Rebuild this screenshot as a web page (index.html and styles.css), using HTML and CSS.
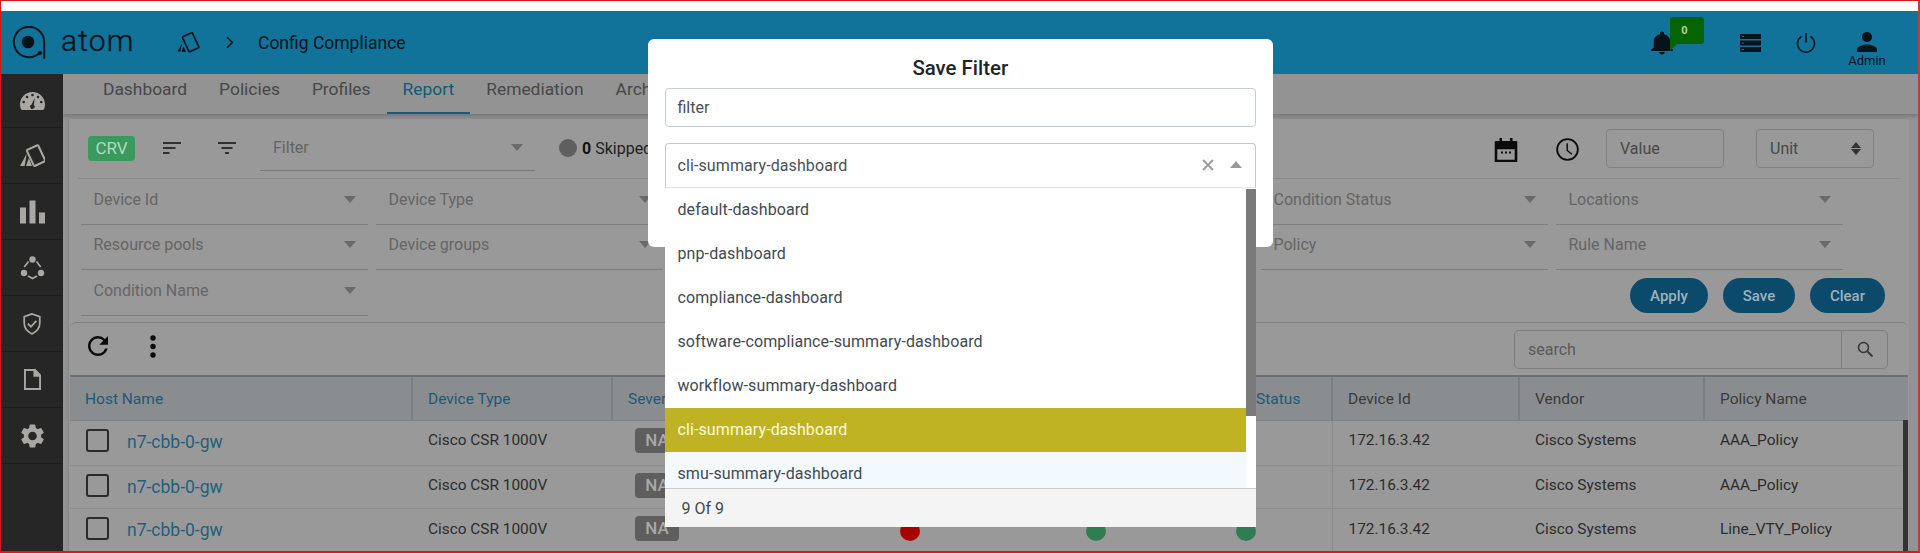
FILE: index.html
```html
<!DOCTYPE html>
<html lang="en">
<head>
<meta charset="utf-8">
<title>Config Compliance</title>
<link rel="stylesheet" href="styles.css">
</head>
<body>
<div class="page">
  <div class="topgap"></div>
  <header class="header">
    <svg class="logo" viewBox="0 0 34 34"><path d="M27.5 27a15.2 15.2 0 1 1 4.7-10.5V32" fill="none" stroke="#07131c" stroke-width="1.9" stroke-linecap="round"/><circle cx="16" cy="16" r="6.3" fill="#07131c"/><circle cx="28" cy="27" r="2" fill="#07131c"/></svg>
    <span class="brand">atom</span>
    <svg class="crumb-icon" viewBox="0 0 24 24"><rect x="8.200" y="3" width="11" height="16.500" rx="1.200" transform="rotate(-25 13.700 11.300)" fill="none" stroke="#07131c" stroke-width="1.700"/><path d="M5 12.500 .5 20.500h3zM6.300 15.500l-1.700 5.300h4.500z" fill="#07131c"/></svg>
    <svg class="chevron" viewBox="0 0 10 16"><path d="M1.5 1.5 8 8l-6.500 6.500" fill="none" stroke="#07131c" stroke-width="1.800"/></svg>
    <span class="crumb">Config Compliance</span>
    <div class="header-right">
      <div class="bell">
        <svg class="bell-icon" viewBox="4 2 16 20.5" preserveAspectRatio="none"><path d="M12 22c1.100 0 2-.9 2-2h-4c0 1.100.9 2 2 2zm6-6v-5c0-3.070-1.630-5.640-4.500-6.320V4c0-.83-.67-1.500-1.500-1.500s-1.500.67-1.500 1.500v.68C7.640 5.360 6 7.920 6 11v5l-2 2v1h16v-1l-2-2z" fill="#07131c"/></svg>
        <span class="notice">0</span>
      </div>
      <svg class="server" viewBox="0 0 21 18"><path d="M0 0h21v5H0zM0 6.500h21v5H0zM0 13h21v5H0z" fill="#07131c"/><path d="M2 2h2v1H2zM2 8.500h2v1H2zM2 15h2v1H2z" fill="#1a7ba3"/></svg>
      <svg class="power" viewBox="0 0 20 20"><path d="M5.500 3.500a8.500 8.500 0 1 0 9 0M10 0v9.500" fill="none" stroke="#07131c" stroke-width="1.600"/></svg>
      <div class="user">
        <svg class="user-icon" viewBox="4 4 16 16" preserveAspectRatio="none"><path d="M12 12c2.210 0 4-1.790 4-4s-1.790-4-4-4-4 1.790-4 4 1.790 4 4 4zm0 2c-2.670 0-8 1.340-8 4v2h16v-2c0-2.660-5.330-4-8-4z" fill="#07131c"/></svg>
        <span class="user-name">Admin</span>
      </div>
    </div>
  </header>

  <div class="body">
    <nav class="sidebar">
      <div class="side-item first">
        <svg class="side-icon" viewBox="0 0 25 18"><path d="M12.500 0C5.600 0 0 5.500 0 12.500c0 1.700.3 3.200.8 4.300.2.700.7 1.200 1.400 1.200h20.600c.7 0 1.200-.5 1.400-1.200.5-1.100.8-2.600.8-4.300C25 5.500 19.400 0 12.500 0z" fill="#a9a7a3"/><g fill="#262626"><circle cx="12.500" cy="3" r="1.300"/><circle cx="7" cy="5" r="1.300"/><circle cx="18" cy="5" r="1.300"/><circle cx="3.700" cy="10" r="1.300"/><circle cx="21.300" cy="10" r="1.300"/><path d="m14.800 5.800-1 7.200a2.200 2.200 0 1 1-2.300-.3z"/></g></svg>
      </div>
      <div class="side-item">
        <svg class="side-icon" viewBox="0 0 24 22"><rect x="9.400" y="2.100" width="12" height="17" rx="1.200" transform="rotate(-25 15.400 10.600)" fill="none" stroke="#a9a7a3" stroke-width="2"/><path d="M6.500 8.500 0 20.500h4.500zM8.500 13l-2.700 7.500h5.700z" fill="#a9a7a3"/></svg>
      </div>
      <div class="side-item">
        <svg class="side-icon" viewBox="0 0 25 23"><path d="M0 7h6v16H0zM9.500 0h6v23h-6zM19 12h6v11h-6z" fill="#a9a7a3"/></svg>
      </div>
      <div class="side-item">
        <svg class="side-icon" viewBox="0 0 24 24"><path d="M8 5.500 3.800 11M16 5.500l4.200 5.500M7.500 20l4.500 2.500 4.500-2.500" fill="none" stroke="#a9a7a3" stroke-width="1.800"/><circle cx="12" cy="3.500" r="3.200" fill="#a9a7a3"/><circle cx="3.500" cy="17" r="3.200" fill="#a9a7a3"/><circle cx="20.500" cy="17" r="3.200" fill="#a9a7a3"/></svg>
      </div>
      <div class="side-item">
        <svg class="side-icon icon-shield" viewBox="0 0 20 24"><path d="M10 1 1.500 4v7c0 5.500 3.500 9.500 8.500 12 5-2.500 8.500-6.500 8.500-12V4z" fill="none" stroke="#a9a7a3" stroke-width="1.900"/><path d="m5.500 11.500 3.300 3.500 6-6.500" fill="none" stroke="#a9a7a3" stroke-width="2"/></svg>
      </div>
      <div class="side-item">
        <svg class="side-icon icon-file" viewBox="0 0 18 22"><path d="M1 1h10l6 6v14H1z" fill="none" stroke="#a9a7a3" stroke-width="2"/><path d="M10 0h2l6 6v2h-8z" fill="#a9a7a3"/></svg>
      </div>
      <div class="side-item">
        <svg class="side-icon icon-gear" viewBox="2.500 2 19 20"><path d="M19.140 12.940c.04-.3.06-.61.06-.94 0-.32-.02-.64-.07-.94l2.030-1.580a.49.49 0 0 0 .12-.61l-1.920-3.320a.488.488 0 0 0-.59-.22l-2.390.96c-.5-.38-1.030-.7-1.620-.94l-.36-2.540a.484.484 0 0 0-.48-.41h-3.840c-.24 0-.43.17-.47.41l-.36 2.540c-.59.24-1.130.57-1.620.94l-2.390-.96c-.22-.08-.47 0-.59.22L2.740 8.870c-.12.21-.08.47.12.61l2.030 1.580c-.05.3-.09.63-.09.94s.02.64.07.94l-2.030 1.580a.49.49 0 0 0-.12.61l1.920 3.320c.12.22.37.29.59.22l2.390-.96c.5.38 1.030.7 1.620.94l.36 2.540c.05.24.24.41.48.41h3.840c.24 0 .44-.17.47-.41l.36-2.540c.59-.24 1.130-.56 1.620-.94l2.390.96c.22.08.47 0 .59-.22l1.920-3.320c.12-.22.07-.47-.12-.61l-2.010-1.580zM12 15.600c-1.980 0-3.600-1.620-3.600-3.600s1.620-3.600 3.600-3.600 3.600 1.620 3.600 3.600-1.620 3.600-3.600 3.600z" fill="#a9a7a3"/></svg>
      </div>
    </nav>

    <main class="main">
      <div class="tabs">
        <span class="tab">Dashboard</span>
        <span class="tab">Policies</span>
        <span class="tab">Profiles</span>
        <span class="tab active">Report</span>
        <span class="tab">Remediation</span>
        <span class="tab">Archive</span>
      </div>

      <section class="panel">
        <div class="topbar">
          <span class="crv">CRV</span>
          <svg class="sort-icon" viewBox="0 0 18 12"><path d="M0 1h18M0 6h12.500M0 11h6.500" stroke="#111" stroke-width="1.700"/></svg>
          <svg class="funnel-icon" viewBox="0 0 18 12"><path d="M0 1h18M3.500 6h11M7 11h4" stroke="#111" stroke-width="1.700"/></svg>
          <div class="filter-select"><span>Filter</span><i class="caret"></i></div>
          <span class="status-dot"></span>
          <span class="status-text"><b>0</b> Skipped</span>
          <div class="time-tools">
            <svg class="calendar" viewBox="0 0 24 24"><path d="M2 4.500h20V23H2zM2 10h20" fill="none" stroke="#0b0b0b" stroke-width="2.600"/><path d="M5.500 0h2.500v4H5.500zM16 0h2.500v4H16zM2 3h20v6H2z" fill="#0b0b0b"/><path d="M7 13.500h2v2H7zM11 13.500h2v2h-2zM15 13.500h2v2h-2z" fill="#0b0b0b"/></svg>
            <svg class="clock" viewBox="0 0 24 24"><circle cx="12" cy="12" r="10.800" fill="none" stroke="#0b0b0b" stroke-width="1.900"/><path d="M11.700 5.500V13l5 4" fill="none" stroke="#0b0b0b" stroke-width="1.500"/></svg>
            <div class="mini-input">Value</div>
            <div class="mini-input unit">Unit<i class="updown"></i></div>
          </div>
        </div>

        <div class="filters">
          <div class="field"><span>Device Id</span><i class="caret"></i></div>
          <div class="field"><span>Device Type</span><i class="caret"></i></div>
          <div class="field"><span></span><i class="caret"></i></div>
          <div class="field"><span></span><i class="caret"></i></div>
          <div class="field"><span>Condition Status</span><i class="caret"></i></div>
          <div class="field"><span>Locations</span><i class="caret"></i></div>
          <div class="field"><span>Resource pools</span><i class="caret"></i></div>
          <div class="field"><span>Device groups</span><i class="caret"></i></div>
          <div class="field"><span></span><i class="caret"></i></div>
          <div class="field"><span></span><i class="caret"></i></div>
          <div class="field"><span>Policy</span><i class="caret"></i></div>
          <div class="field"><span>Rule Name</span><i class="caret"></i></div>
          <div class="field"><span>Condition Name</span><i class="caret"></i></div>
          <div class="actions">
            <span class="btn btn-apply">Apply</span>
            <span class="btn btn-save">Save</span>
            <span class="btn btn-clear">Clear</span>
          </div>
        </div>

        <div class="grid-card">
          <div class="toolbar">
            <svg class="refresh" viewBox="4 4 16 16"><path d="M17.650 6.350A7.958 7.958 0 0 0 12 4c-4.420 0-7.990 3.580-7.990 8s3.570 8 7.990 8c3.730 0 6.840-2.550 7.730-6h-2.080A5.990 5.990 0 0 1 12 18c-3.310 0-6-2.690-6-6s2.690-6 6-6c1.660 0 3.140.69 4.220 1.780L13 11h7V4l-2.350 2.350z" fill="#0b0b0b"/></svg>
            <svg class="kebab" viewBox="0 0 6 23"><circle cx="3" cy="3" r="2.700" fill="#0b0b0b"/><circle cx="3" cy="11.500" r="2.700" fill="#0b0b0b"/><circle cx="3" cy="20" r="2.700" fill="#0b0b0b"/></svg>
            <div class="search">
              <span class="search-text">search</span>
              <span class="search-btn"><svg class="search-icon" viewBox="0 0 16 16"><circle cx="6.500" cy="6.500" r="5" fill="none" stroke="#333" stroke-width="1.500"/><path d="m10.500 10.500 5 5" stroke="#333" stroke-width="1.800"/></svg></span>
            </div>
          </div>
          <div class="table-wrap">
            <table class="table">
              <colgroup>
                <col class="c-host"><col class="c-type"><col class="c-sev"><col class="c-a"><col class="c-b"><col class="c-c"><col class="c-id"><col class="c-vendor"><col class="c-policy">
              </colgroup>
              <thead>
                <tr>
                  <th class="sortable">Host Name</th>
                  <th class="sortable">Device Type</th>
                  <th class="sortable">Severity</th>
                  <th></th>
                  <th></th>
                  <th class="sortable">Condition Status</th>
                  <th>Device Id</th>
                  <th>Vendor</th>
                  <th>Policy Name</th>
                </tr>
              </thead>
              <tbody>
                <tr>
                  <td class="host"><span class="check"></span><a class="link">n7-cbb-0-gw</a></td>
                  <td>Cisco CSR 1000V</td>
                  <td><span class="na">NA</span></td>
                  <td class="dot-a"><i class="dot red"></i></td>
                  <td class="dot-b"><i class="dot green"></i></td>
                  <td class="dot-c"><i class="dot green"></i></td>
                  <td>172.16.3.42</td>
                  <td>Cisco Systems</td>
                  <td>AAA_Policy</td>
                </tr>
                <tr>
                  <td class="host"><span class="check"></span><a class="link">n7-cbb-0-gw</a></td>
                  <td>Cisco CSR 1000V</td>
                  <td><span class="na">NA</span></td>
                  <td class="dot-a"><i class="dot red"></i></td>
                  <td class="dot-b"><i class="dot green"></i></td>
                  <td class="dot-c"><i class="dot green"></i></td>
                  <td>172.16.3.42</td>
                  <td>Cisco Systems</td>
                  <td>AAA_Policy</td>
                </tr>
                <tr>
                  <td class="host"><span class="check"></span><a class="link">n7-cbb-0-gw</a></td>
                  <td>Cisco CSR 1000V</td>
                  <td><span class="na">NA</span></td>
                  <td class="dot-a"><i class="dot red"></i></td>
                  <td class="dot-b"><i class="dot green"></i></td>
                  <td class="dot-c"><i class="dot green"></i></td>
                  <td>172.16.3.42</td>
                  <td>Cisco Systems</td>
                  <td>Line_VTY_Policy</td>
                </tr>
              </tbody>
            </table>
            <div class="table-scroll"></div>
          </div>
        </div>
      </section>
    </main>
  </div>

  <div class="modal">
    <h2 class="modal-title">Save Filter</h2>
    <div class="text-input">filter</div>
    <div class="combo">
      <div class="combo-value">
        <span class="combo-text">cli-summary-dashboard</span>
        <svg class="combo-clear" viewBox="0 0 12 12"><path d="m1 1 10 10M11 1 1 11" stroke="#9a9a9a" stroke-width="1.800"/></svg>
        <i class="combo-caret"></i>
      </div>
      <div class="dropdown">
        <div class="options">
          <div class="option">default-dashboard</div>
          <div class="option">pnp-dashboard</div>
          <div class="option">compliance-dashboard</div>
          <div class="option">software-compliance-summary-dashboard</div>
          <div class="option">workflow-summary-dashboard</div>
          <div class="option selected">cli-summary-dashboard</div>
          <div class="option hovered">smu-summary-dashboard</div>
          <div class="options-scroll"></div>
        </div>
        <div class="dropdown-foot">9 Of 9</div>
      </div>
    </div>
  </div>
</div>
</body>
</html>
```

FILE: styles.css
```css
* { box-sizing: border-box; }
html, body { margin: 0; padding: 0; }
body { font-family: Roboto, "Liberation Sans", sans-serif; background: #fff; }

.page {
  position: relative;
  width: 1920px;
  height: 553px;
  overflow: hidden;
  display: flex;
  flex-direction: column;
  border-top: 1px solid #d8171d;
  border-left: 1px solid #d8171d;
  border-right: 2px solid #c23a3a;
  border-bottom: 2px solid #e0141c;
  background: #fff;
}
.topgap { height: 10px; flex: none; }

/* header */
.header {
  height: 63px;
  flex: none;
  display: flex;
  align-items: center;
  background: #11729a;
  color: #07131c;
  padding-left: 11px;
}
.logo { width: 34px; height: 34px; flex: none; }
.brand { width: 72px; margin-left: 15px; font-size: 30px; font-weight: 300; letter-spacing: 1.2px; line-height: 1; padding-bottom: 4px; -webkit-text-stroke: .4px #07131c; }
.crumb-icon { width: 24px; height: 24px; margin-left: 44px; flex: none; }
.chevron { width: 8px; height: 13px; margin-left: 25px; flex: none; }
.crumb { margin-left: 24px; font-size: 17.5px; }
.header-right { margin-left: auto; display: flex; align-items: center; align-self: stretch; padding-right: 33px; }
.bell { position: relative; width: 22px; height: 24px; margin-right: 67px; }
.bell-icon { width: 22px; height: 24px; display: block; }
.notice {
  position: absolute;
  left: 19px;
  top: -14px;
  width: 34px;
  height: 27px;
  background: #046404;
  border-radius: 3px;
  color: #b9d2a0;
  font-size: 11px;
  font-weight: 700;
  display: flex;
  align-items: center;
  justify-content: center;
  padding-right: 5px;
}
.notice::after {
  content: "";
  position: absolute;
  left: 0;
  top: 26px;
  border-top: 8px solid #046404;
  border-right: 8px solid transparent;
}
.server { width: 21px; height: 18px; margin-right: 35px; }
.power { width: 20px; height: 20px; margin-right: 33px; }
.user { width: 36px; align-self: stretch; display: flex; flex-direction: column; align-items: center; padding-top: 21px; }
.user-icon { width: 20px; height: 20px; flex: none; }
.user-name { font-size: 13px; line-height: 18px; }

/* layout */
.body { flex: 1; min-height: 0; display: flex; }
.sidebar { width: 62px; flex: none; background: #262626; }
.side-item { height: 56px; display: flex; align-items: center; justify-content: center; border-bottom: 1px solid #1b1b1b; }
.side-item.first { height: 54px; }
.side-icon { width: 25px; height: 24px; }
.side-icon.icon-shield { width: 20px; height: 22px; }
.side-icon.icon-file { width: 17px; height: 21px; }
.side-icon.icon-gear { width: 23px; height: 24px; }
.main { flex: 1; min-width: 0; display: flex; flex-direction: column; background: #939393; overflow: hidden; }

/* tabs */
.tabs { height: 40px; flex: none; display: flex; padding-left: 24px; background: #939393; box-shadow: 0 3px 3px #7c7c7c; position: relative; }
.tab { padding: 0 16px; font-size: 17.4px; line-height: 30px; color: #474747; border-bottom: 2px solid transparent; }
.tab.active { color: #0f5a78; border-bottom: 2px solid #0f5f7f; }

/* panel */
.panel { flex: 1; min-height: 0; margin: 5px 9px 0 6px; background: #999; display: flex; flex-direction: column; box-shadow: -1px 0 2px #858585; }
.topbar { height: 60px; flex: none; margin: 0 9px; padding: 10px 26px 11px 10px; display: flex; align-items: center; border-bottom: 1px solid #8a8a8a; }
.crv { width: 47px; height: 25px; border-radius: 4px; background: #3a9a5e; color: #b5d8c2; font-size: 17px; text-align: center; line-height: 25px; flex: none; }
.sort-icon { width: 18px; height: 12px; margin-left: 28px; flex: none; }
.funnel-icon { width: 18px; height: 12px; margin-left: 37px; flex: none; }
.filter-select { width: 275px; height: 42px; margin-left: 24px; margin-top: 4px; padding: 0 12px 4px 13px; display: flex; align-items: center; justify-content: space-between; border-bottom: 1px solid #7a7a7a; font-size: 16px; color: #636363; flex: none; }
.status-dot { width: 18px; height: 18px; border-radius: 50%; background: #5f5f5f; margin-left: 24px; flex: none; }
.status-text { margin-left: 5px; font-size: 16px; color: #222; white-space: nowrap; }
.status-text b { color: #111; }
.time-tools { margin-left: auto; display: flex; align-items: center; }
.calendar { width: 24px; height: 24px; margin-top: 3px; }
.clock { width: 23px; height: 23px; margin-left: 38px; margin-top: 3px; }
.mini-input { width: 118px; height: 39px; margin-left: 27px; padding: 0 13px; display: flex; align-items: center; justify-content: space-between; border: 1px solid #828282; border-radius: 4px; font-size: 16px; color: #484848; }
.mini-input.unit { margin-left: 32px; }
.updown { position: relative; width: 10px; height: 13px; margin-right: -1px; }
.updown::before, .updown::after { content: ""; position: absolute; left: 0; border-left: 5px solid transparent; border-right: 5px solid transparent; }
.updown::before { top: 0; border-bottom: 6px solid #333; }
.updown::after { bottom: 0; border-top: 6px solid #333; }

.caret { width: 0; height: 0; border-left: 6.5px solid transparent; border-right: 6.5px solid transparent; border-top: 7px solid #6a6a6a; flex: none; }

/* filter fields */
.filters { flex: none; display: flex; flex-wrap: wrap; align-content: flex-start; column-gap: 8px; padding-left: 12px; height: 143px; }
.field { width: 287px; height: 45.5px; padding: 0 12px 4px 12.500px; display: flex; align-items: center; justify-content: space-between; border-bottom: 1px solid #7d7d7d; font-size: 16px; color: #656565; }
.actions { flex: 1; display: flex; justify-content: flex-end; gap: 15px; padding: 8px 24px 0 0; align-items: flex-start; }
.btn { height: 35px; border-radius: 18px; background: #0b4a6b; color: #9db2bd; font-size: 15px; font-weight: 500; display: flex; align-items: center; justify-content: center; }
.btn-apply { width: 78px; }
.btn-save { width: 72px; }
.btn-clear { width: 75px; }

/* table */
.grid-card { flex: 1; min-height: 0; margin: 0 1px; border-top: 1px solid #7f7f7f; border-radius: 6px 6px 0 0; display: flex; flex-direction: column; }
.toolbar { height: 54px; flex: none; display: flex; align-items: center; padding: 0 20px 0 18px; border-bottom: 2px solid #6f6f6f; }
.refresh { width: 20px; height: 20px; flex: none; margin-bottom: 6px; }
.kebab { width: 6px; height: 23px; margin-left: 42px; flex: none; margin-bottom: 6px; }
.search { margin-left: auto; width: 374px; height: 39px; display: flex; border: 1px solid #7e7e7e; border-radius: 5px; }
.search-text { flex: 1; padding-left: 13px; font-size: 16px; line-height: 38px; color: #5a5a5a; }
.search-btn { width: 46px; border-left: 1px solid #7e7e7e; display: flex; justify-content: center; padding-top: 10px; }
.search-icon { width: 16px; height: 16px; }

.table-wrap { position: relative; flex: 1; min-height: 0; overflow: hidden; }
.table { width: 1838px; table-layout: fixed; border-collapse: collapse; }
.c-host { width: 342px; }
.c-type { width: 200px; }
.c-sev { width: 228px; }
.c-a { width: 160px; }
.c-b { width: 170px; }
.c-c { width: 162px; }
.c-id { width: 187px; }
.c-vendor { width: 185px; }
.c-policy { width: 204px; }
.table th { height: 43px; padding: 1px 0 0 15px; background: #8a8d90; border-right: 2px solid #7c7f82; border-bottom: 1px solid #808080; text-align: left; font-size: 15.5px; font-weight: 400; color: #3a3a3a; white-space: nowrap; }
.table th:last-child { border-right: 0; }
.table th.sortable { color: #1f5876; }
.table td { height: 44px; padding: 0 0 3px 16px; border-bottom: 1px solid #8d8d8d; font-size: 15.4px; color: #2c2c2c; white-space: nowrap; }
.table td:nth-child(7) { border-left: 1px solid #8a8a8a; }
.table tbody tr:first-child td { height: 45px; padding-bottom: 5px; }
.table tbody tr:nth-child(2) td { height: 43px; }
.table tbody td.host { padding: 0 0 0 16px; }
.table tbody tr:first-child td.host { padding-top: 3px; }
.check { display: inline-block; width: 23px; height: 23px; margin-top: -3px; border: 2px solid #2a2a2a; border-radius: 3px; vertical-align: middle; }
.link { margin-left: 18px; font-size: 17.5px; color: #1f607f; vertical-align: middle; }
.table td .na { display: inline-block; margin-left: 7px; width: 44px; height: 25px; border-radius: 4px; background: #5e5e5e; color: #a8a8a8; font-size: 17px; font-weight: 500; line-height: 25px; text-align: center; }
.table tbody td.dot-a { padding-left: 60px; }
.table tbody td.dot-b { padding-left: 86px; }
.table tbody td.dot-c { padding-left: 66px; }
.dot { display: block; width: 20px; height: 20px; border-radius: 50%; margin-top: 5px; }
.dot.red { background: #a80000; }
.dot.green { background: #2f7d52; }
.table-scroll { position: absolute; right: 0; top: 43px; width: 5px; bottom: 0; background: #333; }

/* modal */
.modal { position: absolute; left: 647px; top: 38px; width: 625px; height: 208px; padding: 0 17px 0 16.500px; background: #fff; border-radius: 6px; }
.modal-title { margin: 0; height: 49px; padding-top: 17px; text-align: center; font-size: 20.4px; line-height: 24px; font-weight: 500; color: #212529; }
.text-input { height: 39px; padding: 0 12px; border: 1px solid #c8cdd1; border-radius: 4px; font-size: 16px; line-height: 37px; color: #495057; }
.combo { position: relative; margin-top: 16px; }
.combo-value { height: 45px; padding: 0 13px 0 12px; display: flex; align-items: center; border: 1px solid #c4c8cb; border-bottom-color: #e3e3e3; border-radius: 4px 4px 0 0; font-size: 16px; letter-spacing: .1px; color: #495057; }
.combo-text { flex: 1; }
.combo-clear { width: 12px; height: 12px; margin-top: -2px; }
.combo-caret { width: 0; height: 0; margin-left: 16px; margin-top: -2px; border-left: 6.500px solid transparent; border-right: 6.500px solid transparent; border-bottom: 7px solid #9a9a9a; }
.dropdown { position: absolute; left: 0; right: 0; top: 45px; height: 339px; display: flex; flex-direction: column; background: #fff; border-radius: 0 0 3px 3px; }
.options { position: relative; height: 300px; overflow: hidden; padding-right: 10px; }
.option { height: 44px; padding: 0 13px; font-size: 16px; letter-spacing: .1px; line-height: 43px; color: #424a50; white-space: nowrap; }
.option.selected { background: #bfb324; color: #fbf8dd; }
.option.hovered { background: #f4f9fe; }
.options-scroll { position: absolute; right: 0; top: 1px; width: 10px; height: 227px; background: #7a7a7a; }
.dropdown-foot { height: 39px; padding: 1px 0 0 17px; background: #f4f4f4; border-top: 1px solid #ccc; font-size: 16px; line-height: 37px; color: #424a50; }
```
